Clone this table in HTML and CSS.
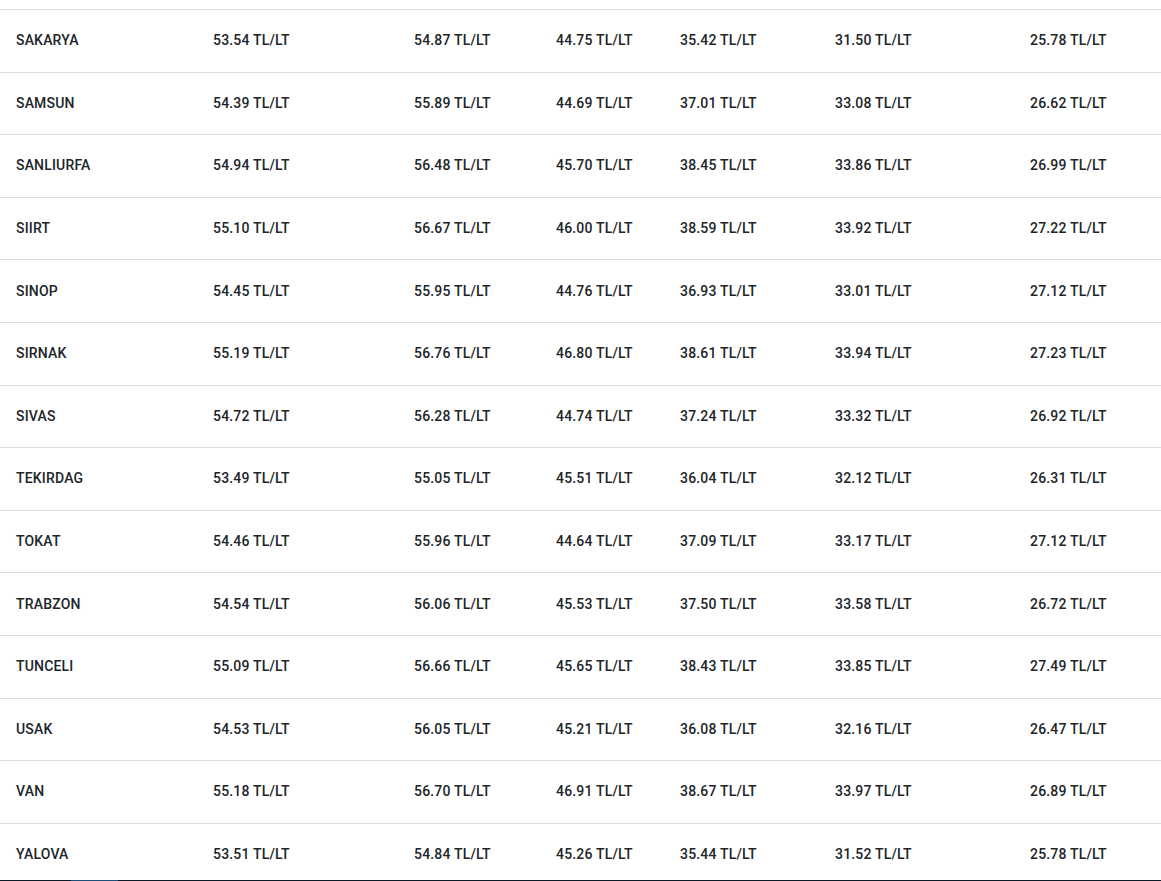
FILE: index.html
```html
<!DOCTYPE html>
<html lang="tr">
<head>
<meta charset="utf-8">
<title>Akaryakıt Fiyatları</title>
<link rel="stylesheet" href="styles.css">
</head>
<body>
<div class="page">
<table class="prices">
<colgroup>
<col class="c1"><col class="c2"><col class="c3"><col class="c4"><col class="c5"><col class="c6"><col class="c7">
</colgroup>
<tbody>
<tr><td>SAKARYA</td><td>53.54 TL/LT</td><td>54.87 TL/LT</td><td>44.75 TL/LT</td><td>35.42 TL/LT</td><td>31.50 TL/LT</td><td>25.78 TL/LT</td></tr>
<tr><td>SAMSUN</td><td>54.39 TL/LT</td><td>55.89 TL/LT</td><td>44.69 TL/LT</td><td>37.01 TL/LT</td><td>33.08 TL/LT</td><td>26.62 TL/LT</td></tr>
<tr><td>SANLIURFA</td><td>54.94 TL/LT</td><td>56.48 TL/LT</td><td>45.70 TL/LT</td><td>38.45 TL/LT</td><td>33.86 TL/LT</td><td>26.99 TL/LT</td></tr>
<tr><td>SIIRT</td><td>55.10 TL/LT</td><td>56.67 TL/LT</td><td>46.00 TL/LT</td><td>38.59 TL/LT</td><td>33.92 TL/LT</td><td>27.22 TL/LT</td></tr>
<tr><td>SINOP</td><td>54.45 TL/LT</td><td>55.95 TL/LT</td><td>44.76 TL/LT</td><td>36.93 TL/LT</td><td>33.01 TL/LT</td><td>27.12 TL/LT</td></tr>
<tr><td>SIRNAK</td><td>55.19 TL/LT</td><td>56.76 TL/LT</td><td>46.80 TL/LT</td><td>38.61 TL/LT</td><td>33.94 TL/LT</td><td>27.23 TL/LT</td></tr>
<tr><td>SIVAS</td><td>54.72 TL/LT</td><td>56.28 TL/LT</td><td>44.74 TL/LT</td><td>37.24 TL/LT</td><td>33.32 TL/LT</td><td>26.92 TL/LT</td></tr>
<tr><td>TEKIRDAG</td><td>53.49 TL/LT</td><td>55.05 TL/LT</td><td>45.51 TL/LT</td><td>36.04 TL/LT</td><td>32.12 TL/LT</td><td>26.31 TL/LT</td></tr>
<tr><td>TOKAT</td><td>54.46 TL/LT</td><td>55.96 TL/LT</td><td>44.64 TL/LT</td><td>37.09 TL/LT</td><td>33.17 TL/LT</td><td>27.12 TL/LT</td></tr>
<tr><td>TRABZON</td><td>54.54 TL/LT</td><td>56.06 TL/LT</td><td>45.53 TL/LT</td><td>37.50 TL/LT</td><td>33.58 TL/LT</td><td>26.72 TL/LT</td></tr>
<tr><td>TUNCELI</td><td>55.09 TL/LT</td><td>56.66 TL/LT</td><td>45.65 TL/LT</td><td>38.43 TL/LT</td><td>33.85 TL/LT</td><td>27.49 TL/LT</td></tr>
<tr><td>USAK</td><td>54.53 TL/LT</td><td>56.05 TL/LT</td><td>45.21 TL/LT</td><td>36.08 TL/LT</td><td>32.16 TL/LT</td><td>26.47 TL/LT</td></tr>
<tr><td>VAN</td><td>55.18 TL/LT</td><td>56.70 TL/LT</td><td>46.91 TL/LT</td><td>38.67 TL/LT</td><td>33.97 TL/LT</td><td>26.89 TL/LT</td></tr>
<tr><td>YALOVA</td><td>53.51 TL/LT</td><td>54.84 TL/LT</td><td>45.26 TL/LT</td><td>35.44 TL/LT</td><td>31.52 TL/LT</td><td>25.78 TL/LT</td></tr>
</tbody>
</table>
</div>
<div class="bottom-bar"><span class="bar-accent"></span></div>
</body>
</html>
```
FILE: styles.css
```css
html, body {
  margin: 0;
  padding: 0;
  background: #ffffff;
  overflow: hidden;
}

body {
  font-family: Roboto, "Liberation Sans", Arial, sans-serif;
  color: #212529;
  height: 881px;
}

.page {
  padding-top: 9px;
}

.prices {
  width: 1161px;
  border-collapse: collapse;
  table-layout: fixed;
}

.c1 { width: 197px; }
.c2 { width: 201px; }
.c3 { width: 142px; }
.c4 { width: 124px; }
.c5 { width: 155px; }
.c6 { width: 195px; }
.c7 { width: 147px; }

.prices tr {
  height: 62.6px;
}

.prices td {
  border-top: 1px solid #dedede;
  padding: 0 0 1px 16px;
  font-size: 14px;
  font-weight: 500;
  line-height: 20px;
  letter-spacing: 0.18px;
  vertical-align: middle;
  white-space: nowrap;
}

.bottom-bar {
  position: fixed;
  left: 0;
  right: 0;
  bottom: 0;
  height: 1px;
  background: #0c1a27;
}

.bar-accent {
  position: absolute;
  left: 71px;
  width: 47px;
  top: 0;
  height: 1px;
  background: #1d4f79;
}
```
